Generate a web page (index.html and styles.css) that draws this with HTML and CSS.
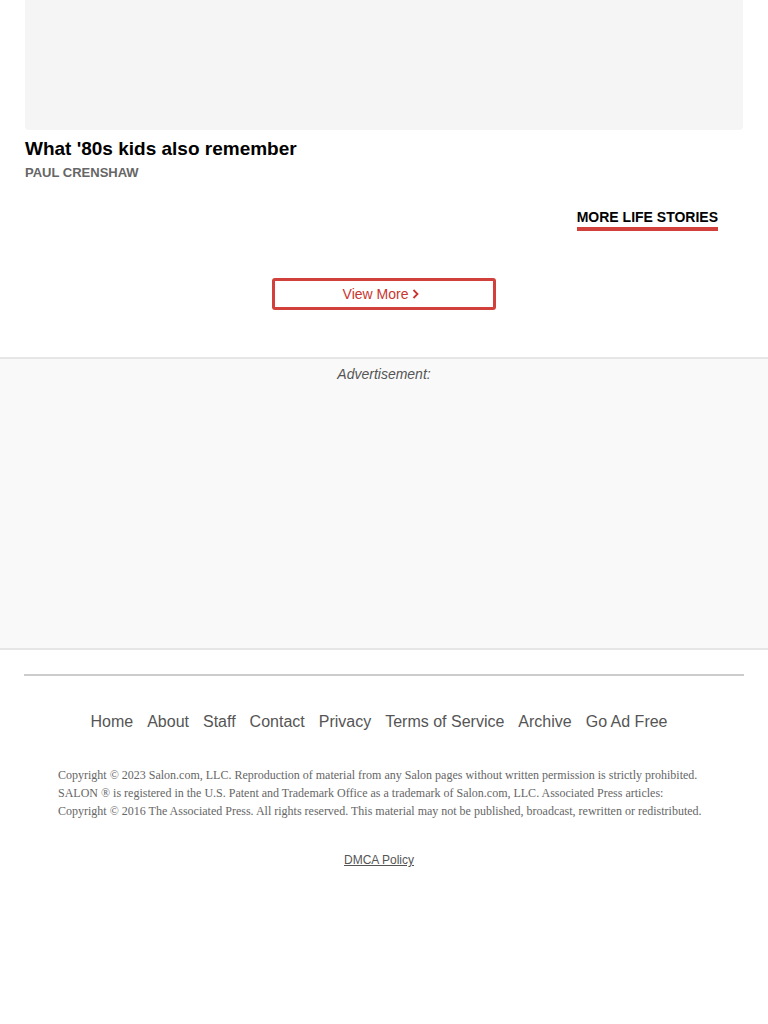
FILE: index.html
```html
<!DOCTYPE html>
<html lang="en">
<head>
<meta charset="utf-8">
<title>Salon</title>
<link rel="stylesheet" href="styles.css">
</head>
<body>
<div class="main">
  <div class="thumb"></div>
  <h2 class="title">What '80s kids also remember</h2>
  <div class="author">PAUL CRENSHAW</div>
  <div class="more-row"><a class="more-link" href="#">MORE LIFE STORIES</a></div>
  <div class="view-row">
    <a class="view-btn" href="#">View More<svg class="chev" width="7" height="10" viewBox="0 0 7 10"><polyline points="1.5,1 5.5,5 1.5,9" fill="none" stroke="#c9352f" stroke-width="1.8"/></svg></a>
  </div>
</div>
<div class="ad">
  <div class="ad-label">Advertisement:</div>
</div>
<footer class="footer">
  <div class="rule"></div>
  <nav class="nav">
    <a href="#">Home</a>
    <a href="#">About</a>
    <a href="#">Staff</a>
    <a href="#">Contact</a>
    <a href="#">Privacy</a>
    <a href="#">Terms of Service</a>
    <a href="#">Archive</a>
    <a href="#">Go Ad Free</a>
  </nav>
  <p class="copy">Copyright © 2023 Salon.com, LLC. Reproduction of material from any Salon pages without written permission is strictly prohibited.<br>SALON ® is registered in the U.S. Patent and Trademark Office as a trademark of Salon.com, LLC. Associated Press articles:<br>Copyright © 2016 The Associated Press. All rights reserved. This material may not be published, broadcast, rewritten or redistributed.</p>
  <div class="dmca"><a href="#">DMCA Policy</a></div>
</footer>
</body>
</html>
```
FILE: styles.css
```css
html, body {
  margin: 0;
  padding: 0;
  background: #fff;
}
body {
  font-family: "Liberation Sans", Arial, sans-serif;
  color: #000;
  height: 1024px;
}
a { text-decoration: none; color: inherit; }

.main {
  padding: 0 25px;
}
.thumb {
  height: 130px;
  background: #f5f5f5;
  border-radius: 0 0 4px 4px;
}
.title {
  margin: 8px 0 0;
  font-size: 19px;
  line-height: 22px;
  font-weight: bold;
  color: #000;
}
.author {
  margin-top: 5px;
  font-size: 13px;
  line-height: 16px;
  font-weight: bold;
  color: #666;
}
.more-row {
  display: flex;
  justify-content: flex-end;
  padding-right: 25px;
  margin-top: 28px;
}
.more-link {
  font-size: 14px;
  line-height: 16px;
  font-weight: bold;
  color: #000;
  padding-bottom: 2px;
  border-bottom: 4px solid #d1403a;
}
.view-row {
  display: flex;
  justify-content: center;
  margin-top: 47px;
}
.view-btn {
  box-sizing: border-box;
  width: 224px;
  height: 32px;
  border: 3px solid #d1403a;
  border-radius: 3px;
  display: flex;
  align-items: center;
  justify-content: center;
  gap: 4px;
  padding-right: 6px;
  font-size: 14px;
  line-height: 16px;
  color: #c9352f;
}
.chev { display: block; margin-top: -1px; }

.ad {
  margin-top: 47px;
  height: 289px;
  background: #f9f9f9;
  border-top: 2px solid #e6e6e6;
  border-bottom: 2px solid #e6e6e6;
}
.ad-label {
  padding-top: 7px;
  text-align: center;
  font-size: 14px;
  line-height: 16px;
  font-style: italic;
  color: #555;
}

.footer {
  padding: 0 24px;
}
.rule {
  margin-top: 24px;
  height: 2px;
  background: #cccccc;
}
.nav {
  margin-top: 36px;
  display: flex;
  justify-content: center;
  gap: 14px;
  padding-right: 10px;
  font-size: 16px;
  line-height: 20px;
  color: #555;
}
.copy {
  margin: 34px 0 0;
  padding: 0 34px;
  font-family: "Liberation Serif", "Times New Roman", serif;
  font-size: 12px;
  line-height: 18px;
  color: #666;
  white-space: nowrap;
}
.dmca {
  margin-top: 32px;
  text-align: center;
  padding-right: 10px;
  font-size: 12px;
  line-height: 16px;
}
.dmca a {
  color: #555;
  text-decoration: underline;
}
```
